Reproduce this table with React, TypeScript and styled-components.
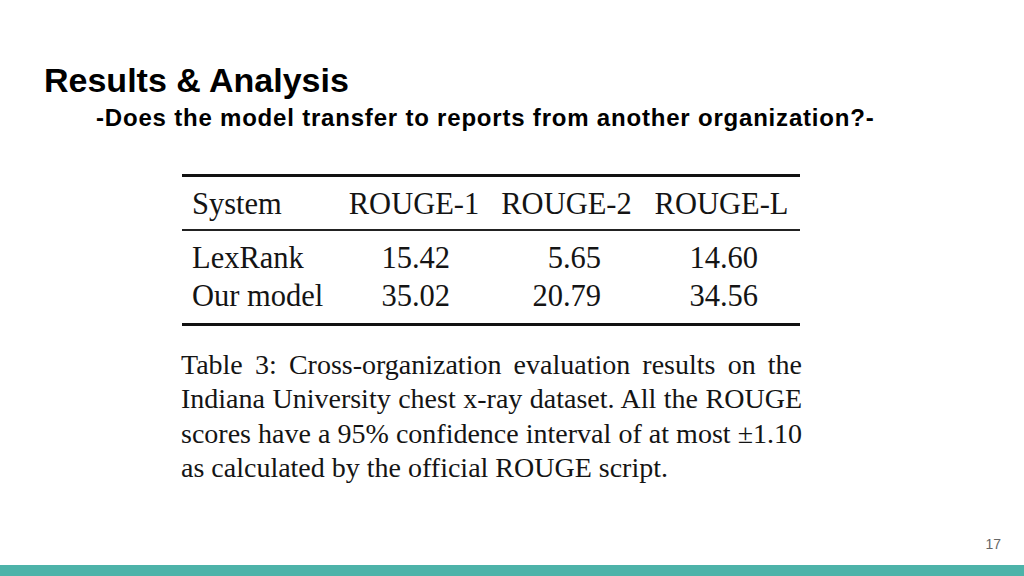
import React from "react";
import styled, { createGlobalStyle } from "styled-components";

const GlobalStyle = createGlobalStyle`
  html, body { margin: 0; padding: 0; background: #ffffff; }
  #root { width: 1024px; height: 576px; }
`;

const Slide = styled.div`
  width: 1024px;
  height: 576px;
  display: flex;
  flex-direction: column;
  background: #ffffff;
  overflow: hidden;
`;

const Title = styled.h1`
  margin: 0;
  padding: 61px 0 0 44px;
  font-family: "Liberation Sans", Arial, sans-serif;
  font-weight: 700;
  font-size: 34px;
  line-height: 38px;
  color: #000000;
`;

const Subtitle = styled.h2`
  margin: 5px 0 0 96px;
  font-family: "Liberation Sans", Arial, sans-serif;
  font-weight: 700;
  font-size: 24px;
  letter-spacing: 0.8px;
  line-height: 28px;
  color: #000000;
`;

const Table = styled.div`
  margin: 42px 0 0 182px;
  width: 618px;
  display: grid;
  grid-template-columns: 156px 152px 153px 157px;
  border-top: 3px solid #111111;
  border-bottom: 3px solid #111111;
  font-family: "Liberation Serif", "Times New Roman", serif;
  font-size: 30.5px;
  color: #141414;
`;

const HeadCell = styled.div<{ $left?: boolean }>`
  padding: 8px 0 6px ${(p) => (p.$left ? "10px" : "0")};
  line-height: 38px;
  text-align: ${(p) => (p.$left ? "left" : "center")};
  border-bottom: 2px solid #222222;
  white-space: nowrap;
`;

const Cell = styled.div<{ $left?: boolean; $first?: boolean; $last?: boolean; $pr?: number }>`
  padding-top: ${(p) => (p.$first ? "8px" : "0")};
  padding-bottom: ${(p) => (p.$last ? "8px" : "0")};
  padding-left: ${(p) => (p.$left ? "10px" : "0")};
  padding-right: ${(p) => (p.$left ? 0 : p.$pr ?? 40)}px;
  line-height: 38px;
  text-align: ${(p) => (p.$left ? "left" : "right")};
  white-space: nowrap;
`;

const Caption = styled.div`
  margin: 22px 0 0 181px;
  width: 621px;
  font-family: "Liberation Serif", "Times New Roman", serif;
  font-size: 28px;
  line-height: 34.3px;
  color: #141414;
`;

const CaptionLine = styled.div<{ $last?: boolean }>`
  text-align: ${(p) => (p.$last ? "left" : "justify")};
  text-align-last: ${(p) => (p.$last ? "left" : "justify")};
  white-space: nowrap;
`;

const Spacer = styled.div`
  flex: 1;
`;

const Footer = styled.div`
  display: flex;
  justify-content: flex-end;
  padding: 0 23px 13px 0;
`;

const PageNumber = styled.span`
  font-family: "Liberation Sans", Arial, sans-serif;
  font-size: 14px;
  line-height: 16px;
  color: #666666;
`;

const Bar = styled.div`
  height: 11px;
  background: #4db3a9;
  flex-shrink: 0;
`;

const rows = [
  { name: "LexRank", vals: ["15.42", "5.65", "14.60"] },
  { name: "Our model", vals: ["35.02", "20.79", "34.56"] },
];

const padRight = [40, 42, 42];

export default function App() {
  return (
    <>
      <GlobalStyle />
      <Slide>
        <Title>Results &amp; Analysis</Title>
        <Subtitle>-Does the model transfer to reports from another organization?-</Subtitle>
        <Table>
          <HeadCell $left>System</HeadCell>
          <HeadCell>ROUGE-1</HeadCell>
          <HeadCell>ROUGE-2</HeadCell>
          <HeadCell>ROUGE-L</HeadCell>
          {rows.map((r, ri) => (
            <React.Fragment key={r.name}>
              <Cell $left $first={ri === 0} $last={ri === rows.length - 1}>
                {r.name}
              </Cell>
              {r.vals.map((v, vi) => (
                <Cell
                  key={vi}
                  $first={ri === 0}
                  $last={ri === rows.length - 1}
                  $pr={padRight[vi]}
                >
                  {v}
                </Cell>
              ))}
            </React.Fragment>
          ))}
        </Table>
        <Caption>
          <CaptionLine>Table 3: Cross-organization evaluation results on the</CaptionLine>
          <CaptionLine>Indiana University chest x-ray dataset. All the ROUGE</CaptionLine>
          <CaptionLine>scores have a 95% confidence interval of at most ±1.10</CaptionLine>
          <CaptionLine $last>as calculated by the official ROUGE script.</CaptionLine>
        </Caption>
        <Spacer />
        <Footer>
          <PageNumber>17</PageNumber>
        </Footer>
        <Bar />
      </Slide>
    </>
  );
}
